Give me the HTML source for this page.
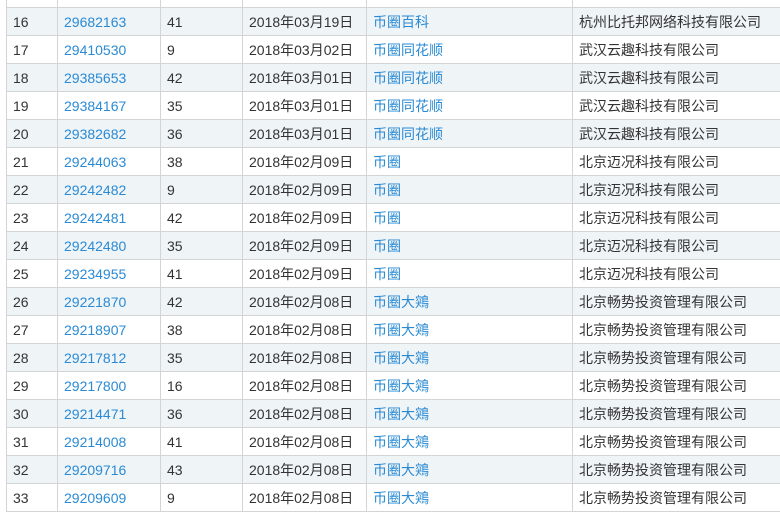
<!DOCTYPE html><html><head><meta charset="utf-8"><style>
html,body{margin:0;width:780px;height:514px;overflow:hidden;background:#fff}
body{position:relative;font-family:"Liberation Sans","Noto Sans CJK SC",sans-serif;font-size:14px;color:#333}
table{position:absolute;left:6px;top:-21px;border-collapse:collapse;table-layout:fixed;width:774px}
td{border:1px solid #d4d4d4;height:27px;padding:0 0 0 6px;white-space:nowrap;overflow:hidden;line-height:16px}
tr:nth-child(even) td{background:#eff4f7}
a{color:#2a8ad4;text-decoration:none}
</style></head><body><table>
<colgroup><col style="width:51px"><col style="width:103px"><col style="width:82px"><col style="width:124px"><col style="width:206px"><col style="width:208px"></colgroup>
<tr><td></td><td></td><td></td><td></td><td></td><td></td></tr>
<tr><td>16</td><td><a>29682163</a></td><td>41</td><td>2018年03月19日</td><td><a>币圈百科</a></td><td>杭州比托邦网络科技有限公司</td></tr>
<tr><td>17</td><td><a>29410530</a></td><td>9</td><td>2018年03月02日</td><td><a>币圈同花顺</a></td><td>武汉云趣科技有限公司</td></tr>
<tr><td>18</td><td><a>29385653</a></td><td>42</td><td>2018年03月01日</td><td><a>币圈同花顺</a></td><td>武汉云趣科技有限公司</td></tr>
<tr><td>19</td><td><a>29384167</a></td><td>35</td><td>2018年03月01日</td><td><a>币圈同花顺</a></td><td>武汉云趣科技有限公司</td></tr>
<tr><td>20</td><td><a>29382682</a></td><td>36</td><td>2018年03月01日</td><td><a>币圈同花顺</a></td><td>武汉云趣科技有限公司</td></tr>
<tr><td>21</td><td><a>29244063</a></td><td>38</td><td>2018年02月09日</td><td><a>币圈</a></td><td>北京迈况科技有限公司</td></tr>
<tr><td>22</td><td><a>29242482</a></td><td>9</td><td>2018年02月09日</td><td><a>币圈</a></td><td>北京迈况科技有限公司</td></tr>
<tr><td>23</td><td><a>29242481</a></td><td>42</td><td>2018年02月09日</td><td><a>币圈</a></td><td>北京迈况科技有限公司</td></tr>
<tr><td>24</td><td><a>29242480</a></td><td>35</td><td>2018年02月09日</td><td><a>币圈</a></td><td>北京迈况科技有限公司</td></tr>
<tr><td>25</td><td><a>29234955</a></td><td>41</td><td>2018年02月09日</td><td><a>币圈</a></td><td>北京迈况科技有限公司</td></tr>
<tr><td>26</td><td><a>29221870</a></td><td>42</td><td>2018年02月08日</td><td><a>币圈大鶟</a></td><td>北京畅势投资管理有限公司</td></tr>
<tr><td>27</td><td><a>29218907</a></td><td>38</td><td>2018年02月08日</td><td><a>币圈大鶟</a></td><td>北京畅势投资管理有限公司</td></tr>
<tr><td>28</td><td><a>29217812</a></td><td>35</td><td>2018年02月08日</td><td><a>币圈大鶟</a></td><td>北京畅势投资管理有限公司</td></tr>
<tr><td>29</td><td><a>29217800</a></td><td>16</td><td>2018年02月08日</td><td><a>币圈大鶟</a></td><td>北京畅势投资管理有限公司</td></tr>
<tr><td>30</td><td><a>29214471</a></td><td>36</td><td>2018年02月08日</td><td><a>币圈大鶟</a></td><td>北京畅势投资管理有限公司</td></tr>
<tr><td>31</td><td><a>29214008</a></td><td>41</td><td>2018年02月08日</td><td><a>币圈大鶟</a></td><td>北京畅势投资管理有限公司</td></tr>
<tr><td>32</td><td><a>29209716</a></td><td>43</td><td>2018年02月08日</td><td><a>币圈大鶟</a></td><td>北京畅势投资管理有限公司</td></tr>
<tr><td>33</td><td><a>29209609</a></td><td>9</td><td>2018年02月08日</td><td><a>币圈大鶟</a></td><td>北京畅势投资管理有限公司</td></tr>
</table></body></html>
